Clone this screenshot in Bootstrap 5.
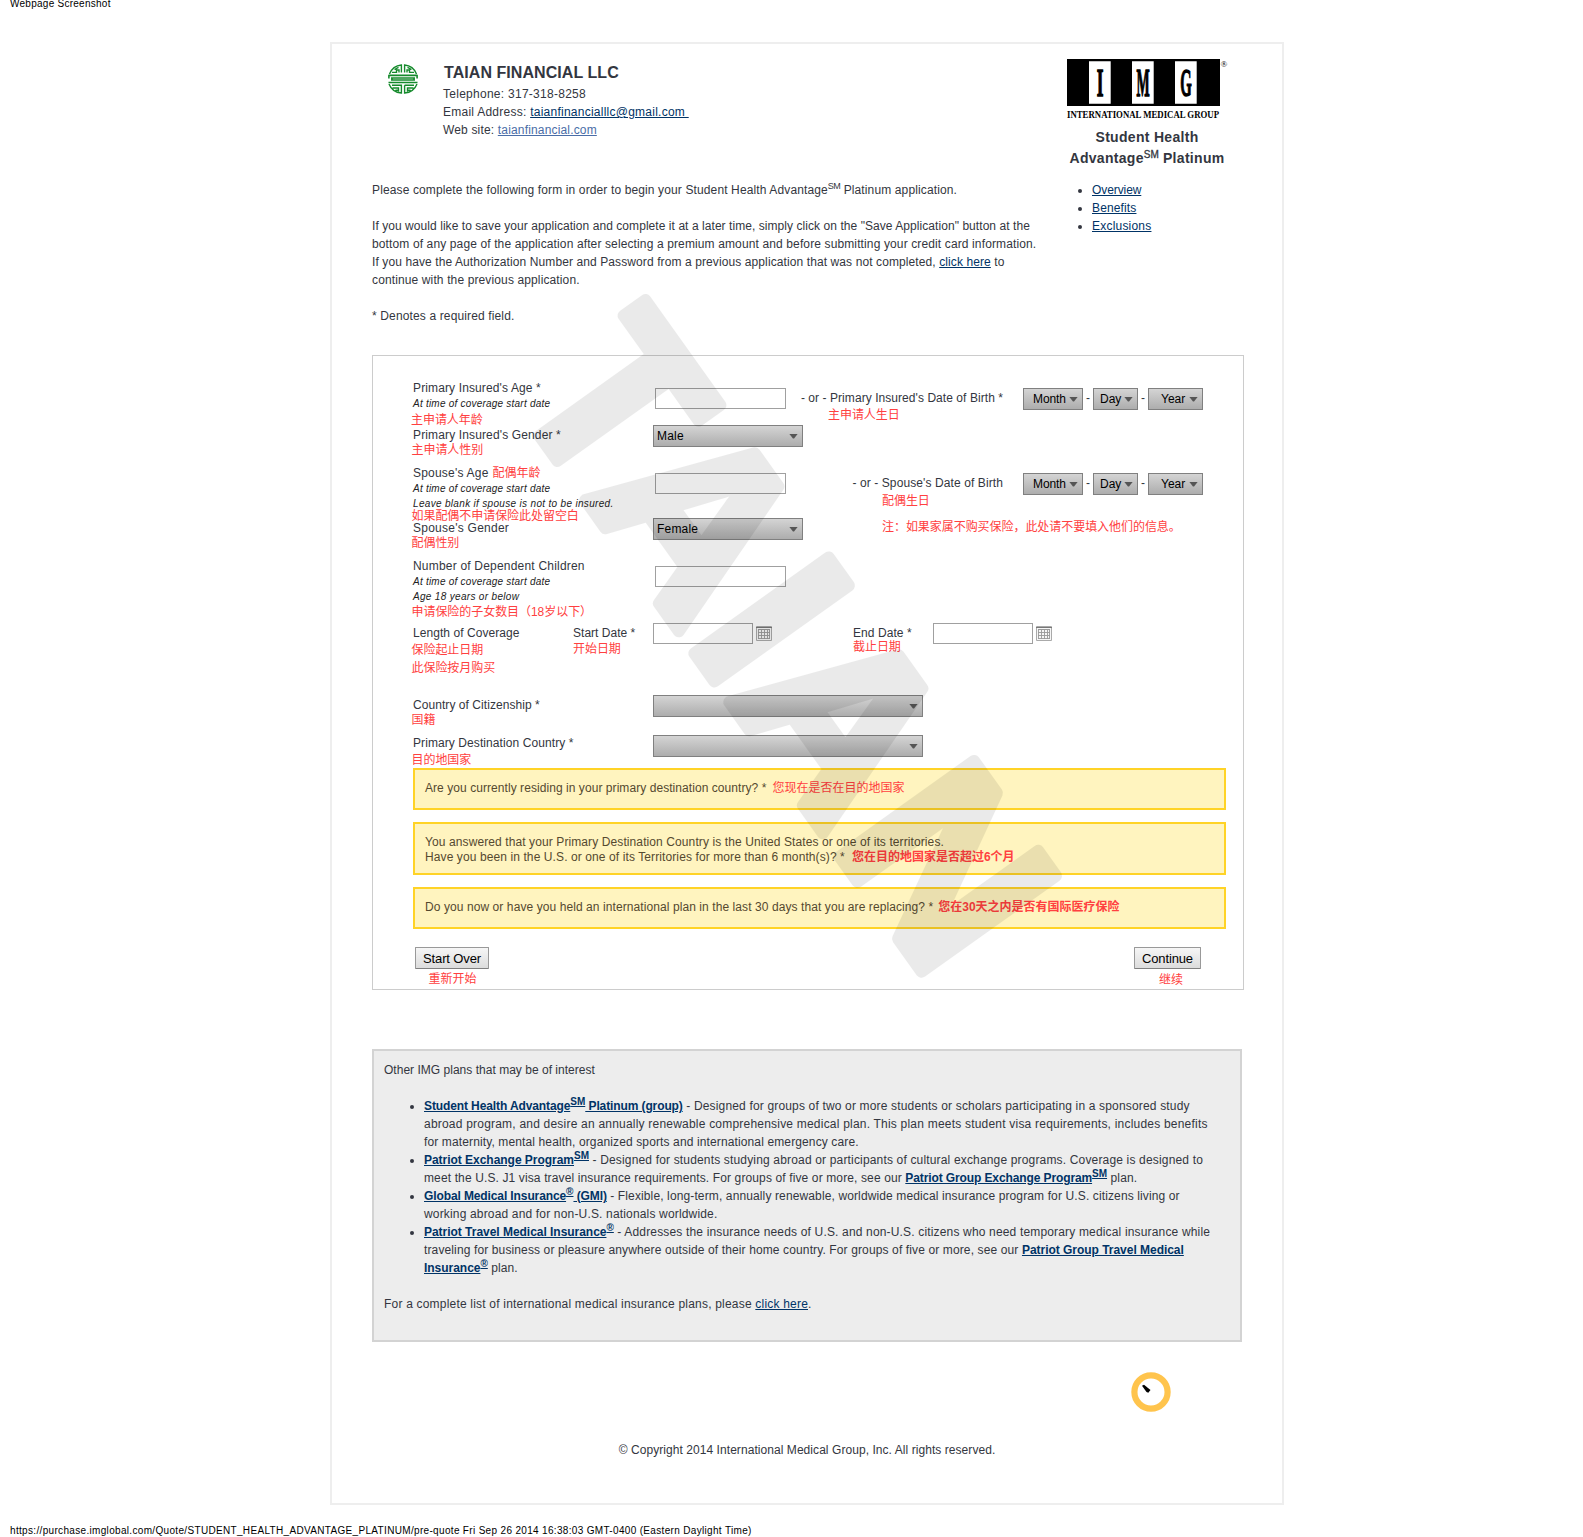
<!DOCTYPE html>
<html lang="en">
<head>
<meta charset="utf-8">
<title>Student Health Advantage Platinum</title>
<link href="https://cdn.jsdelivr.net/npm/bootstrap@5.3.0/dist/css/bootstrap.min.css" rel="stylesheet">
<style>
body{font-family:"Liberation Sans","Noto Sans CJK SC",sans-serif;font-size:12px;line-height:18px;color:#333640;background:#fff;letter-spacing:.1px;overflow-x:hidden}
a{color:#003366}
a.visited-site{color:#4a6da7}
.print-line{font-size:10px;line-height:12px;color:#000;padding-left:10px;white-space:nowrap}
.print-top{margin:-2px 0 32px;letter-spacing:.26px}
.print-bottom{margin-top:20px;letter-spacing:.328px}
.page-frame{width:954px;height:1463px;margin-left:330px;border:2px solid #eee;padding-left:40px}
.main-col{width:695px;padding-top:18px}
.side-col{width:160px;padding-top:15px}
.agent-name{font-size:16px;line-height:22px;font-weight:700;letter-spacing:.06px;margin:0 0 1px 1px}
.agent-logo{width:30px;height:30px;margin:2px 25px 0 16px}
.intro{margin-top:42px;white-space:nowrap}
.plan-name{font-size:14px;line-height:21px;letter-spacing:.3px;margin-top:6px;white-space:nowrap}
.plan-links{margin-top:12px;padding-left:25px}
sup{font-size:9px;line-height:0;position:static;vertical-align:5px;letter-spacing:-.6px}
a sup{display:inline-block;text-decoration:underline;font-size:10px;letter-spacing:0}
.plan-name sup{font-size:10px;font-weight:400;letter-spacing:0;-webkit-text-stroke:.3px}
.quote-form{width:872px;height:635px;border:1px solid #ccc;margin-top:30px;padding:24px 0 0 40px}
.line16{line-height:16px;white-space:nowrap}
.hint{font-size:10px;line-height:15px;font-style:italic;letter-spacing:.22px;white-space:nowrap;color:#222}
.zh{color:#ff4040;font-size:12px;line-height:14px;letter-spacing:-.05px;white-space:nowrap;margin-left:-1.5px}
.zh-in{color:#ff4040;letter-spacing:0;margin-left:4px;line-height:1}
.row-age{height:47px}.row-gender{height:38px}.row-spouse{height:55px}.row-kids{height:67px}.row-dates{height:72px}.row-land{height:38px}.row-dest{height:33px}
.lbl{width:240px;flex:none}
.lbl-dates{width:160px;flex:none}
.lbl-start{width:80px;flex:none}
.fbox{width:131px;height:21px;border:1px solid #a0a0a0;border-radius:0;padding:0;background:#fff;flex:none}
.fbox-off{margin:8px 0 0 2px}
.fbox-date{width:100px;margin:-2px 3px 0 0}
.cal{margin-top:1px;flex:none}
.fsel{height:22px;border:1px solid #808080;background:linear-gradient(#d4d4d4,#adadad);color:#000;line-height:20px;padding:0 4px 0 3px;flex:none;letter-spacing:0}
.fsel::after{content:"";width:9px;height:5px;background:#555;clip-path:polygon(0 0,100% 0,56% 100%,44% 100%)}
.w150{width:150px;margin-top:-2px;letter-spacing:.2px}.w270{width:270px}
.up2{margin-top:-2px}
.sel-m{width:60px;padding-left:9px;letter-spacing:-.1px}.sel-d{width:45px;padding-left:6px}.sel-y{width:55px;padding-left:12px}
.dob{width:217px;margin:10px 20px 0 0}
.dob-sel{margin-top:8px;line-height:20px}
.dob-sel i{width:10px;text-align:center;font-style:normal}
.ask{width:813px;border:2px solid #ffd326;background:#fff4bf;color:#55492f;padding:11px 10px 0;line-height:15px;margin-bottom:12px;white-space:nowrap}
.ask-1{height:42px}.ask-2{height:53px}
.form-foot{width:788px;padding-left:2px;margin-top:18px}
.fbtn{height:22px;border:1px solid #999;border-bottom-color:#808080;border-radius:1px;background:linear-gradient(#f6f6f6,#dcdcdc);color:#000;font-size:13px;line-height:19px;padding:0;letter-spacing:-.14px}
.plans{width:870px;height:293px;border:2px solid #d3d3d3;background:#ededed;padding:10px;margin-top:59px}
.plans ul{padding-left:40px;margin:18px 0}
.plans li{white-space:nowrap}
.plans b{letter-spacing:-.03px}
.plans b.tight{letter-spacing:-.11px}
.timer{margin:30px 0 0 759px}
.copyright{width:870px;margin-top:29px}
.stamp{left:0;top:0;pointer-events:none;z-index:5}
/* letter spacing steps, in hundredths of a pixel */
.ls-m9{letter-spacing:-.09px}.ls-2{letter-spacing:.02px}.ls-5{letter-spacing:.06px}.ls-8{letter-spacing:.083px}.ls-10{letter-spacing:.1px}.ls-12{letter-spacing:.125px}.ls-14{letter-spacing:.137px}.ls-16{letter-spacing:.165px}.ls-19{letter-spacing:.2px}.ls-21{letter-spacing:.21px}.ls-24{letter-spacing:.25px}.ls-27{letter-spacing:.27px}.ls-32{letter-spacing:.32px}
</style>
</head>
<body class="d-flex flex-column position-relative">
<div class="print-line print-top">Webpage Screenshot</div>
<div class="page-frame">
  <div class="d-flex">
    <div class="main-col">
      <div class="d-flex">
        <svg class="agent-logo flex-shrink-0" viewBox="0 0 30 30" fill="none" stroke="#158a2c" stroke-width="1.4">
          <path d="M1.500 10A14.300 14.300 0 0 1 13.400 1V8.500M16.600 8.500V1A14.300 14.300 0 0 1 28.500 10M4 8.400H8.500V6H11V8.500M26 8.400H21.500V6H19V8.500M6.500 5.500L10.500 3.300M23.500 5.500L19.500 3.300"/>
          <path d="M.5 11.400H29.500M3 14H27M3 16H27M.5 18.500H29.500M.9 11V14.500M29.100 11V14.500M4 14V16M26 14V16" stroke-width="1.600"/>
          <path d="M1 20A14.300 14.300 0 0 0 13.400 29V21.300H4M16.600 21.300V29A14.300 14.300 0 0 0 29 20M16.600 21.300H26M4.500 24H10.500V27.500M25.500 24H19.500V27.500M7.500 26.300H10M22.500 26.300H20"/>
        </svg>
        <div>
          <div class="agent-name">TAIAN FINANCIAL LLC</div>
          <div class="ls-27">Telephone: 317-318-8258</div>
          <div class="ls-24">Email Address: <a href="#">taianfinancialllc@gmail.com&nbsp;</a></div>
          <div class="ls-16">Web site: <a href="#" class="visited-site">taianfinancial.com</a></div>
        </div>
      </div>
      <div class="intro">
        <span class="ls-12">Please complete the following form in order to begin your Student Health Advantage<sup>SM</sup> Platinum application.</span><br><br>
        <span class="ls-5">If you would like to save your application and complete it at a later time, simply click on the "Save Application" button at the</span><br>
        <span class="ls-12">bottom of any page of the application after selecting a premium amount and before submitting your credit card information.</span><br>
        <span class="ls-10">If you have the Authorization Number and Password from a previous application that was not completed, <a href="#">click here</a> to</span><br>
        <span class="ls-12">continue with the previous application.</span><br><br>
        <span class="ls-14">* Denotes a required field.</span>
      </div>
    </div>
    <div class="side-col">
      <svg class="d-block overflow-visible" width="162" height="62" viewBox="0 0 162 62" font-family="Liberation Serif, serif" font-weight="700" letter-spacing="0">
        <path d="M0 0H153V47H0z"/><path fill="#fff" d="M22 2.300H43.700V44.700H22zM65 2.300H86.700V44.700H65zM108 2.300H129.700V44.700H108z"/>
        <g font-size="41" text-anchor="middle" stroke="#000" stroke-width="1.400"><text transform="translate(33.200 37.300) scale(.42 1)">I</text><text transform="translate(76 37.300) scale(.34 1)">M</text><text transform="translate(119 37.300) scale(.36 1)">G</text></g>
        <text x="0" y="58.700" font-size="9.800" textLength="152" lengthAdjust="spacingAndGlyphs">INTERNATIONAL MEDICAL GROUP</text>
        <text x="153.500" y="7.500" font-size="9" font-weight="400">®</text>
      </svg>
      <div class="plan-name fw-bold text-center">Student Health<br>Advantage<sup>SM</sup> Platinum</div>
      <ul class="plan-links mb-0">
        <li><a href="#" class="ls-m9">Overview</a></li><li><a href="#" class="ls-14">Benefits</a></li><li><a href="#" class="ls-21">Exclusions</a></li>
      </ul>
    </div>
  </div>

  <form class="quote-form">
    <div class="d-flex align-items-start row-age">
      <div class="lbl"><div class="line16 ls-12">Primary Insured's Age *</div><div class="hint">At time of coverage start date</div><div class="zh" style="margin:2px 0 0 -2px">主申请人年龄</div></div>
      <input class="fbox fbox-off"><div class="dob"><div class="line16 ls-5 text-end">- or - Primary Insured's Date of Birth *</div><div class="zh" style="margin:2px 0 0 42px">主申请人生日</div></div>
      <div class="dob-sel d-flex"><button type="button" class="fsel sel-m d-flex justify-content-between align-items-center">Month</button><i>-</i><button type="button" class="fsel sel-d d-flex justify-content-between align-items-center">Day</button><i>-</i><button type="button" class="fsel sel-y d-flex justify-content-between align-items-center">Year</button></div>
    </div>
    <div class="d-flex align-items-start row-gender">
      <div class="lbl"><div class="line16 ls-14">Primary Insured's Gender *</div><div class="zh">主申请人性别</div></div>
      <button type="button" class="fsel w150 d-flex justify-content-between align-items-center">Male</button>
    </div>
    <div class="d-flex align-items-start row-spouse">
      <div class="lbl"><div class="line16 ls-21">Spouse's Age<span class="zh-in">配偶年龄</span></div><div class="hint">At time of coverage start date</div><div class="hint ls-32">Leave blank if spouse is not to be insured.</div><div class="zh" style="margin-top:-2px">如果配偶不申请保险此处留空白</div></div>
      <input class="fbox fbox-off"><div class="dob"><div class="line16 ls-10 text-end">- or - Spouse's Date of Birth</div><div class="zh" style="margin:3px 0 0 96px">配偶生日</div></div>
      <div class="dob-sel d-flex"><button type="button" class="fsel sel-m d-flex justify-content-between align-items-center">Month</button><i>-</i><button type="button" class="fsel sel-d d-flex justify-content-between align-items-center">Day</button><i>-</i><button type="button" class="fsel sel-y d-flex justify-content-between align-items-center">Year</button></div>
    </div>
    <div class="d-flex align-items-start row-gender">
      <div class="lbl"><div class="line16 ls-24">Spouse's Gender</div><div class="zh">配偶性别</div></div>
      <button type="button" class="fsel w150 d-flex justify-content-between align-items-center">Female</button>
      <div class="zh" style="margin-left:79px">注：如果家属不购买保险，此处请不要填入他们的信息。</div>
    </div>
    <div class="d-flex align-items-start row-kids">
      <div class="lbl"><div class="line16 ls-19">Number of Dependent Children</div><div class="hint">At time of coverage start date</div><div class="hint ls-32">Age 18 years or below</div><div class="zh" style="margin-top:1px">申请保险的子女数目（18岁以下）</div></div>
      <input class="fbox fbox-off">
    </div>
    <div class="d-flex align-items-start row-dates">
      <div class="lbl-dates"><div class="line16 ls-5">Length of Coverage</div><div class="zh" style="margin-top:2px">保险起止日期</div><div class="zh" style="margin-top:4px">此保险按月购买</div></div>
      <div class="lbl-start"><div class="line16 ls-2">Start Date *</div><div class="zh" style="margin:1px 0 0">开始日期</div></div>
      <input class="fbox fbox-date">
      <svg class="cal" width="16" height="15"><path d="M.5.500H15.500V14.500H.5z" fill="#f6f6f6" stroke="#aaa"/><path d="M0 1.500H16" stroke="#777"/><path d="M2 3.500H14" stroke="#999"/><path d="M2.500 3V13M5.500 3V13M8.500 3V13M11.500 3V13M13.500 3V13M2 6.500H14M2 9.500H14M2 12.500H14" stroke="#999" stroke-width=".9"/></svg>
      <div class="lbl-start" style="margin-left:81px"><div class="line16 ls-5">End Date *</div><div class="zh" style="margin:-1px 0 0">截止日期</div></div>
      <input class="fbox fbox-date">
      <svg class="cal" width="16" height="15"><path d="M.5.500H15.500V14.500H.5z" fill="#f6f6f6" stroke="#aaa"/><path d="M0 1.500H16" stroke="#777"/><path d="M2 3.500H14" stroke="#999"/><path d="M2.500 3V13M5.500 3V13M8.500 3V13M11.500 3V13M13.500 3V13M2 6.500H14M2 9.500H14M2 12.500H14" stroke="#999" stroke-width=".9"/></svg>
    </div>
    <div class="d-flex align-items-start row-land">
      <div class="lbl"><div class="line16 ls-5">Country of Citizenship *</div><div class="zh">国籍</div></div>
      <button type="button" class="fsel w270 up2 d-flex justify-content-end align-items-center"></button>
    </div>
    <div class="d-flex align-items-start row-dest">
      <div class="lbl"><div class="line16 ls-8">Primary Destination Country *</div><div class="zh" style="margin-top:2px">目的地国家</div></div>
      <button type="button" class="fsel w270 d-flex justify-content-end align-items-center"></button>
    </div>
    <div class="ask ask-1 ls-5">Are you currently residing in your primary destination country? *<span class="zh-in" style="margin-left:6px">您现在是否在目的地国家</span></div>
    <div class="ask ask-2"><div class="ls-10">You answered that your Primary Destination Country is the United States or one of its territories.</div><div class="ls-10">Have you been in the U.S. or one of its Territories for more than 6 month(s)? *<b class="zh-in" style="margin-left:7px">您在目的地国家是否超过6个月</b></div></div>
    <div class="ask ask-1 ls-8">Do you now or have you held an international plan in the last 30 days that you are replacing? *<b class="zh-in" style="margin-left:5px">您在30天之内是否有国际医疗保险</b></div>
    <div class="form-foot d-flex justify-content-between text-center">
      <div><button type="button" class="fbtn d-block" style="width:74px">Start Over</button><div class="zh" style="margin:3px 0 0 1px">重新开始</div></div>
      <div><button type="button" class="fbtn d-block" style="width:67px">Continue</button><div class="zh" style="margin:4px 0 0 7px">继续</div></div>
    </div>
  </form>

  <div class="plans">
    <div class="ls-2">Other IMG plans that may be of interest</div>
    <ul>
      <li><span class="ls-16"><a href="#"><b class="tight">Student Health Advantage<sup>SM</sup> Platinum (group)</b></a> - Designed for groups of two or more students or scholars participating in a sponsored study</span><br><span class="ls-21">abroad program, and desire an annually renewable comprehensive medical plan. This plan meets student visa requirements, includes benefits</span><br><span class="ls-12">for maternity, mental health, organized sports and international emergency care.</span></li>
      <li><span class="ls-16"><a href="#"><b>Patriot Exchange Program<sup>SM</sup></b></a> - Designed for students studying abroad or participants of cultural exchange programs. Coverage is designed to</span><br><span class="ls-12">meet the U.S. J1 visa travel insurance requirements. For groups of five or more, see our <a href="#"><b class="tight">Patriot Group Exchange Program<sup>SM</sup></b></a> plan.</span></li>
      <li><span class="ls-12"><a href="#"><b class="tight">Global Medical Insurance<sup>®</sup> (GMI)</b></a> - Flexible, long-term, annually renewable, worldwide medical insurance program for U.S. citizens living or</span><br><span class="ls-16">working abroad and for non-U.S. nationals worldwide.</span></li>
      <li><span class="ls-16"><a href="#"><b>Patriot Travel Medical Insurance<sup>®</sup></b></a> - Addresses the insurance needs of U.S. and non-U.S. citizens who need temporary medical insurance while</span><br><span class="ls-12">traveling for business or pleasure anywhere outside of their home country. For groups of five or more, see our <a href="#"><b>Patriot Group Travel Medical</b></a></span><br><a href="#"><b>Insurance<sup>®</sup></b></a> plan.</li>
    </ul>
    <div class="ls-19">For a complete list of international medical insurance plans, please <a href="#">click here</a>.</div>
  </div>
  <svg class="timer d-block" width="40" height="40"><circle cx="20" cy="20" r="16.600" fill="none" stroke="#ffc44d" stroke-width="6.200"/><path d="M11 13.700L13 12.800L19.500 18L17.300 20.700L15.500 20Z"/></svg>
  <div class="copyright text-center ls-5">© Copyright 2014 International Medical Group, Inc. All rights reserved.</div>
</div>
<div class="print-line print-bottom">https://purchase.imglobal.com/Quote/STUDENT_HEALTH_ADVANTAGE_PLATINUM/pre-quote Fri Sep 26 2014 16:38:03 GMT-0400 (Eastern Daylight Time)</div>

<!-- TAIAN watermark across the form -->
<svg class="stamp position-absolute" width="1583" height="1537" aria-hidden="true">
  <g opacity=".08" transform="rotate(54.500)" font-family="Liberation Sans, sans-serif" font-weight="700" font-size="240" stroke="#000" stroke-width="12" stroke-linejoin="round" letter-spacing="0">
    <text transform="translate(616 -186) scale(.92 1)">T</text>
    <text y="-186" x="741 919 989 1169">AIAN</text>
  </g>
</svg>
<script src="https://cdn.jsdelivr.net/npm/bootstrap@5.3.0/dist/js/bootstrap.bundle.min.js"></script>
</body>
</html>
